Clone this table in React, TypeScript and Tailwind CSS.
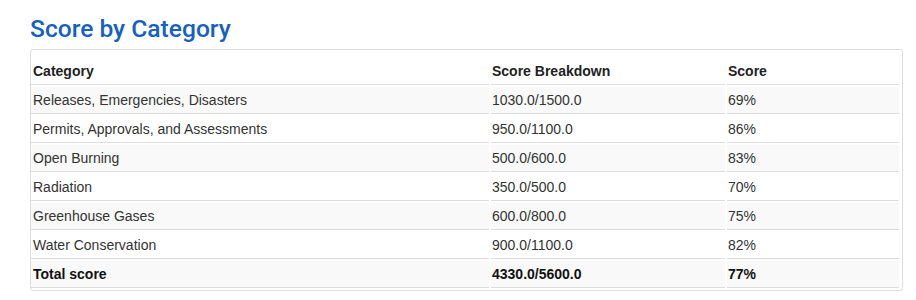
const rows = [
  { category: 'Releases, Emergencies, Disasters', breakdown: '1030.0/1500.0', score: '69%' },
  { category: 'Permits, Approvals, and Assessments', breakdown: '950.0/1100.0', score: '86%' },
  { category: 'Open Burning', breakdown: '500.0/600.0', score: '83%' },
  { category: 'Radiation', breakdown: '350.0/500.0', score: '70%' },
  { category: 'Greenhouse Gases', breakdown: '600.0/800.0', score: '75%' },
  { category: 'Water Conservation', breakdown: '900.0/1100.0', score: '82%' },
]

const cell = 'border-b border-[#dddddd] pl-[1px] py-[4px] text-left align-middle leading-[18px]'
const head = 'border-b border-[#dddddd] pl-[1px] pt-[10px] pb-[4px] text-left align-bottom leading-[18px] font-bold text-[#222]'

export default function App() {
  return (
    <div className="min-h-[300px] w-[916px] bg-white pl-[30px] pt-[14px] font-['Liberation_Sans',Arial,sans-serif] text-[14px] text-[#333]">
      <h2 className="mb-[5px] font-['Roboto',sans-serif] text-[24.6px] font-medium leading-[30px] text-[#1660c4]">
        Score by Category
      </h2>
      <div className="w-[873px] rounded-[3px] border border-[#dddddd]">
        <table className="-ml-[2px] w-[872px] table-fixed border-separate border-spacing-[2px]">
          <colgroup>
            <col className="w-[458px]" />
            <col className="w-[234px]" />
            <col className="w-[172px]" />
          </colgroup>
          <thead>
            <tr>
              <th className={`${head} pl-[2px]`}>Category</th>
              <th className={head}>Score Breakdown</th>
              <th className={head}>Score</th>
            </tr>
          </thead>
          <tbody>
            {rows.map((r, i) => (
              <tr key={r.category}>
                <td className={`${cell} pl-[2px] ${i % 2 === 0 ? 'bg-[#f9f9f9]' : ''}`}>{r.category}</td>
                <td className={`${cell} ${i % 2 === 0 ? 'bg-[#f9f9f9]' : ''}`}>{r.breakdown}</td>
                <td className={`${cell} ${i % 2 === 0 ? 'bg-[#f9f9f9]' : ''}`}>{r.score}</td>
              </tr>
            ))}
            <tr>
              <td className={`${cell} pl-[2px] bg-[#f9f9f9] font-bold text-[#111]`}>Total score</td>
              <td className={`${cell} bg-[#f9f9f9] font-bold text-[#111]`}>4330.0/5600.0</td>
              <td className={`${cell} bg-[#f9f9f9] font-bold text-[#111]`}>77%</td>
            </tr>
          </tbody>
        </table>
      </div>
    </div>
  )
}
